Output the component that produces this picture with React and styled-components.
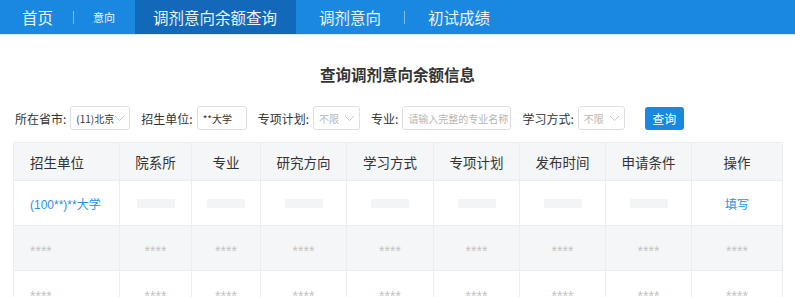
import React from "react";
import styled, { createGlobalStyle } from "styled-components";

const Global = createGlobalStyle`
  body {
    margin: 0;
    background: #fff;
    font-family: "Noto Sans CJK SC", "Noto Sans", sans-serif;
  }
`;

const Nav = styled.nav`
  display: flex;
  align-items: stretch;
  height: 34px;
  background: #1a88e0;
  border-bottom: 1px solid #d9ebfa;
`;

const NavItem = styled.a`
  display: flex;
  align-items: center;
  padding: ${(p) => p.$pad || "0 20px"};
  font-size: ${(p) => (p.$small ? "11px" : "15.5px")};
  color: #eef5fc;
  background: ${(p) => (p.$active ? "#1268b9" : "transparent")};
  text-decoration: none;
  white-space: nowrap;
`;

const Sep = styled.span`
  align-self: center;
  width: 1px;
  height: 13px;
  background: rgba(255, 255, 255, 0.45);
`;

const Title = styled.h2`
  margin: 28px 0 0;
  text-align: center;
  font-size: 15.5px;
  font-weight: 600;
  color: #333;
  line-height: 22px;
`;

const Filters = styled.div`
  display: flex;
  align-items: center;
  gap: 11px;
  margin: 21px 0 0 15px;
  height: 24px;
`;

const Field = styled.label`
  display: flex;
  align-items: center;
  gap: 4px;
  font-size: 12px;
  color: #333;
  white-space: nowrap;
`;

const Box = styled.div`
  display: flex;
  align-items: center;
  justify-content: space-between;
  box-sizing: border-box;
  width: ${(p) => p.$w}px;
  height: 24px;
  padding: 0 4px 0 5px;
  border: 1px solid #dcdfe6;
  border-radius: 3px;
  font-size: 10px;
  white-space: nowrap;
  overflow: hidden;
  color: ${(p) => (p.$muted ? "#b5b5b5" : "#333")};
`;

const Button = styled.button`
  margin-left: 9px;
  width: 39px;
  height: 23px;
  border: none;
  border-radius: 3px;
  background: #1a88e0;
  color: #fff;
  font-family: inherit;
  font-size: 12px;
  padding: 0;
`;

const Table = styled.table`
  margin: 12px 0 0 13px;
  width: 769px;
  border-collapse: collapse;
  table-layout: fixed;
  border-top: 1px solid #ebedf0;
  border-left: 1px solid #ebedf0;
`;

const Th = styled.th`
  height: 37px;
  background: #f5f6f8;
  border-right: 1px solid #ebedf0;
  border-bottom: 1px solid #ebedf0;
  font-size: 13.5px;
  font-weight: 400;
  color: #333;
  text-align: ${(p) => (p.$left ? "left" : "center")};
  padding: ${(p) => (p.$left ? "0 0 0 16px" : "0")};
`;

const Row = styled.tr`
  background: ${(p) => (p.$gray ? "#f5f6f8" : "#fff")};
`;

const Td = styled.td`
  height: 44px;
  border-right: 1px solid #ebedf0;
  border-bottom: 1px solid #ebedf0;
  font-family: "Liberation Sans", "Noto Sans CJK SC", sans-serif;
  font-size: 12px;
  color: #2b8fe6;
  text-align: ${(p) => (p.$left ? "left" : "center")};
  padding: ${(p) => (p.$left ? "0 0 0 16px" : "0")};
`;

const Stars = styled.span`
  font-size: 14px;
  color: #c3c3c3;
  position: relative;
  top: 3px;
`;

const Blank = styled.span`
  display: inline-block;
  vertical-align: middle;
  width: 38px;
  height: 9px;
  background: #f3f4f6;
`;

const Chevron = () => (
  <svg width="11" height="7" viewBox="0 0 11 7" fill="none">
    <path d="M1 1l4.5 4.5L10 1" stroke="#c4c7cc" strokeWidth="1" />
  </svg>
);

const cols = [
  ["招生单位", 106],
  ["院系所", 72],
  ["专业", 69],
  ["研究方向", 86],
  ["学习方式", 87],
  ["专项计划", 86],
  ["发布时间", 86],
  ["申请条件", 86],
  ["操作", 91],
];

export default function App() {
  return (
    <>
      <Global />
      <Nav>
        <NavItem $pad="0 20px 0 22px">首页</NavItem>
        <Sep />
        <NavItem $small $pad="0 20px 0 19px">意向</NavItem>
        <NavItem $active $pad="0 19px 0 18px">调剂意向余额查询</NavItem>
        <NavItem $pad="0 23px 0 23px">调剂意向</NavItem>
        <Sep />
        <NavItem $pad="0 20px 0 23px">初试成绩</NavItem>
      </Nav>
      <Title>查询调剂意向余额信息</Title>
      <Filters>
        <Field>
          所在省市:
          <Box $w={60}>
            (11)北京 <Chevron />
          </Box>
        </Field>
        <Field>
          招生单位:
          <Box $w={50}>**大学</Box>
        </Field>
        <Field>
          专项计划:
          <Box $w={47} $muted>
            不限 <Chevron />
          </Box>
        </Field>
        <Field>
          专业:
          <Box $w={109} $muted>请输入完整的专业名称</Box>
        </Field>
        <Field>
          学习方式:
          <Box $w={47} $muted>
            不限 <Chevron />
          </Box>
        </Field>
        <Button>查询</Button>
      </Filters>
      <Table>
        <colgroup>
          {cols.map(([n, w]) => (
            <col key={n} style={{ width: w }} />
          ))}
        </colgroup>
        <thead>
          <tr>
            {cols.map(([n], i) => (
              <Th key={n} $left={i === 0}>
                {n}
              </Th>
            ))}
          </tr>
        </thead>
        <tbody>
          <Row>
            <Td $left>(100**)**大学</Td>
            {cols.slice(1, 8).map(([n]) => (
              <Td key={n}>
                <Blank />
              </Td>
            ))}
            <Td>填写</Td>
          </Row>
          {[1, 2].map((r) => (
            <Row key={r} $gray={r === 1}>
              {cols.map(([n], i) => (
                <Td key={n} $left={i === 0}>
                  <Stars>****</Stars>
                </Td>
              ))}
            </Row>
          ))}
        </tbody>
      </Table>
    </>
  );
}
